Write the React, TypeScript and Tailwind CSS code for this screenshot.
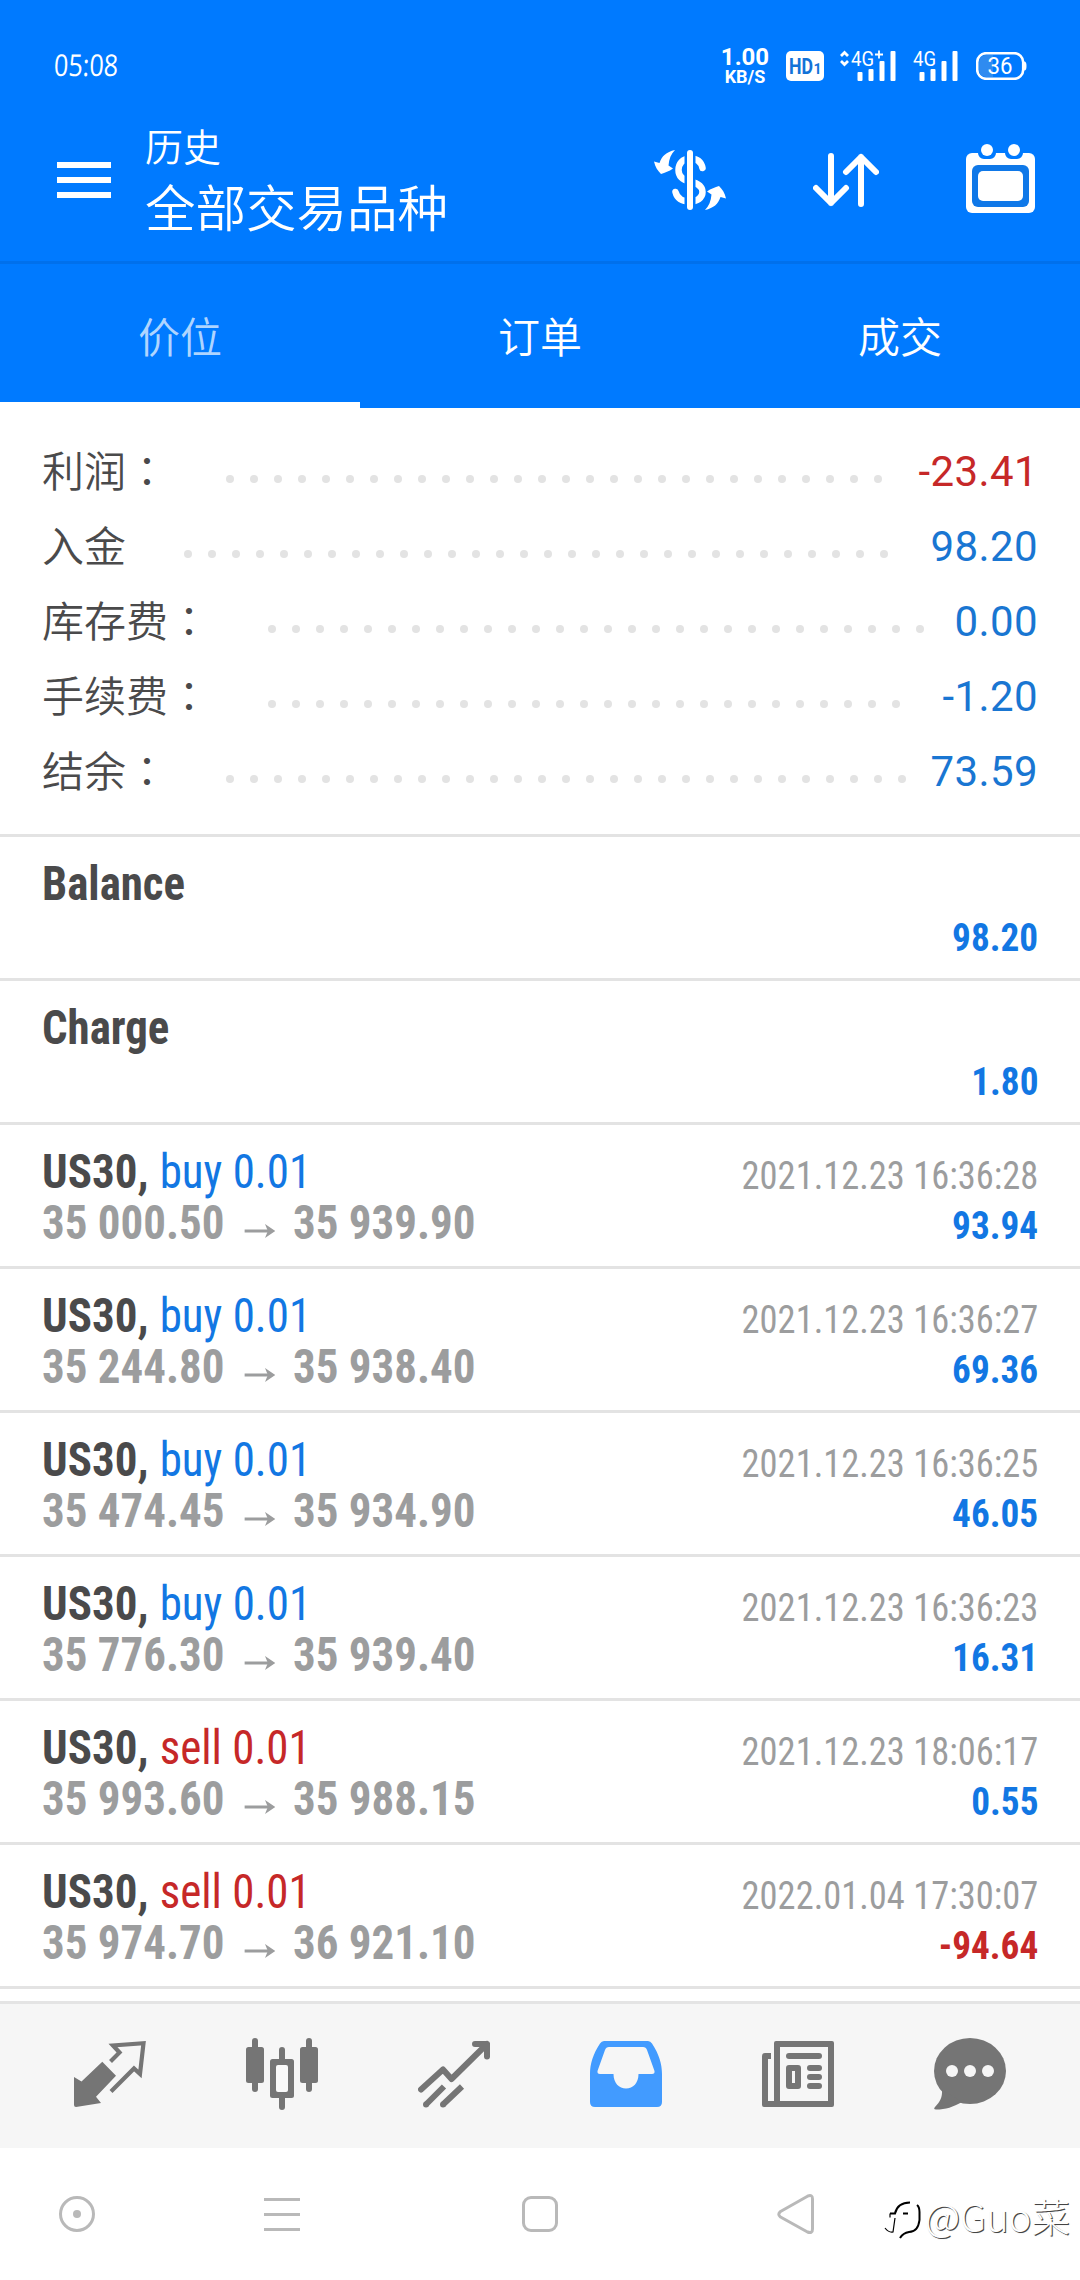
import type { ReactNode } from 'react'
import { clsx } from 'clsx'

type SummaryItem = { label: string; value: string; dots: number; negative?: boolean }
type Deal = { side: 'buy' | 'sell'; open: string; close: string; time: string; profit: string }

const summary: SummaryItem[] = [
  { label: '利润：', value: '-23.41', dots: 28, negative: true },
  { label: '入金', value: '98.20', dots: 30 },
  { label: '库存费：', value: '0.00', dots: 28 },
  { label: '手续费：', value: '-1.20', dots: 27 },
  { label: '结余：', value: '73.59', dots: 29 },
]

const operations = [
  { name: 'Balance', value: '98.20' },
  { name: 'Charge', value: '1.80' },
]

const deals: Deal[] = [
  { side: 'buy', open: '35 000.50', close: '35 939.90', time: '2021.12.23 16:36:28', profit: '93.94' },
  { side: 'buy', open: '35 244.80', close: '35 938.40', time: '2021.12.23 16:36:27', profit: '69.36' },
  { side: 'buy', open: '35 474.45', close: '35 934.90', time: '2021.12.23 16:36:25', profit: '46.05' },
  { side: 'buy', open: '35 776.30', close: '35 939.40', time: '2021.12.23 16:36:23', profit: '16.31' },
  { side: 'sell', open: '35 993.60', close: '35 988.15', time: '2021.12.23 18:06:17', profit: '0.55' },
  { side: 'sell', open: '35 974.70', close: '36 921.10', time: '2022.01.04 17:30:07', profit: '-94.64' },
]

function Signal({ plus }: { plus?: boolean }) {
  return (
    <svg width="58" height="32" viewBox="0 0 58 32" fill="white" className="shrink-0 overflow-visible">
      {plus && (
        <path d="M2 6 L5.5 2.5 L9 6 M2 11 L5.5 14.5 L9 11" fill="none" stroke="white" strokeWidth="2.8" />
      )}
      <text x="12" y="16" fontSize="21" textLength="23" lengthAdjust="spacingAndGlyphs" className="font-['Roboto',sans-serif]">4G</text>
      {plus && <path d="M36 4.5h8M40 0.5v8" stroke="white" strokeWidth="1.8" />}
      <rect x="18.5" y="22" width="5" height="9" rx="1" />
      <rect x="29.5" y="19" width="5" height="12" rx="1" />
      <rect x="40.5" y="11" width="5" height="20" rx="1" />
      <rect x="51.5" y="1" width="5" height="30" rx="1" />
    </svg>
  )
}

function StatusBar() {
  return (
    <div className="flex h-[99px] items-center pt-[33px] pl-[54px] pr-[53px] text-white">
      <span className="mb-[3px] inline-block origin-left -skew-x-3 scale-x-[0.84] font-['Open_Sans',sans-serif] text-[30px] leading-none">05:08</span>
      <div className="ml-auto flex items-center">
        <div className="mr-[17px] flex w-[48px] flex-col items-center font-['Roboto',sans-serif] font-bold">
          <span className="text-[24px] leading-[19px]">1.00</span>
          <span className="mt-[1px] text-[18px] leading-[17px]">KB/S</span>
        </div>
        <svg width="38" height="30" viewBox="0 0 38 30" className="font-['Roboto',sans-serif] font-bold" fill="#1272d8">
          <rect width="38" height="30" rx="5" fill="white" />
          <text x="3" y="23" fontSize="22.5" textLength="24" lengthAdjust="spacingAndGlyphs">HD</text>
          <text x="27.5" y="22.5" fontSize="14">1</text>
        </svg>
        <div className="ml-[15px]"><Signal plus /></div>
        <div className="ml-[4px]"><Signal /></div>
        <div className="ml-[17px]">
          <svg width="51" height="28" viewBox="0 0 51 28">
            <rect x="1.2" y="1.2" width="46" height="25.6" rx="9" fill="none" stroke="white" strokeWidth="2.6" />
            <path d="M10 3h7v22h-7a7 7 0 0 1-7-7v-8a7 7 0 0 1 7-7Z" fill="#2f8bf0" />
            <path d="M48 9.5c2 0 2.5 1.5 2.5 4.5s-.5 4.5-2.5 4.5Z" fill="white" />
            <text x="11.5" y="22" fontSize="23" textLength="25" lengthAdjust="spacingAndGlyphs" className="font-['Roboto',sans-serif] font-normal" fill="white">36</text>
          </svg>
        </div>
      </div>
    </div>
  )
}

function Header() {
  return (
    <div className="flex h-[162px] items-center pl-[57px] pr-[45px] text-white">
      <div className="flex w-[54px] flex-col gap-[9px]">
        <div className="h-[6px] bg-white" />
        <div className="h-[6px] bg-white" />
        <div className="h-[6px] bg-white" />
      </div>
      <div className="mb-[6px] ml-[34px] flex flex-col font-['Noto_Sans_CJK_SC',sans-serif] font-[350]">
        <span className="text-[38px] leading-[56px]">历史</span>
        <span className="text-[50.5px] leading-[64px]">全部交易品种</span>
      </div>
      <div className="ml-auto flex items-center gap-[87px]">
        <svg width="72" height="60" viewBox="0 0 72 60" fill="white">
          <path
            d="M48.5 18C47 10.5 42 8.5 36 8.5C28.5 8.5 24.5 14 24.5 20C24.5 27 29 30 36 31.5C45 33.5 48.5 37 48.5 42C48.5 48 43 51.5 36 51.5C28 51.5 23 48 21.5 42"
            fill="none"
            stroke="white"
            strokeWidth="6.5"
            strokeLinecap="round"
          />
          <path d="M36 0v60" stroke="#007aff" strokeWidth="11" />
          <path d="M36 3v54" stroke="white" strokeWidth="6" strokeLinecap="round" />
          <path d="M21 0C12 2 8 6 5.5 13L0 11.5C1 17 4 21 7 24C11 22.5 15 21.5 19 18.5L14.5 15.5C15 9 17 4 21 0Z" />
          <path d="M51 60C60 58 64 54 66.5 47L72 48.5C71 43 68 39 65 36C61 37.5 57 38.5 53 41.5L57.5 44.5C57 51 55 56 51 60Z" />
        </svg>
        <svg width="66" height="54" viewBox="0 0 66 54" fill="none" stroke="white" strokeWidth="6" strokeLinecap="round" strokeLinejoin="round">
          <path d="M18 3v47M3 35l15 15 15-15" />
          <path d="M48 51V4M33 19L48 4l15 15" />
        </svg>
        <svg width="69" height="69" viewBox="0 0 69 69" fill="white" className="-mt-[3px]">
          <rect y="9" width="69" height="60" rx="6" />
          <path d="M12 8v1a6 6 0 0 0 6 6h6a6 6 0 0 0 6-6V8ZM39 8v1a6 6 0 0 0 6 6h6a6 6 0 0 0 6-6V8Z" fill="#007aff" />
          <circle cx="21" cy="6" r="6" />
          <circle cx="48" cy="6" r="6" />
          <rect x="6" y="21" width="57" height="42" rx="6" fill="#0f78e8" />
          <rect x="12" y="27" width="45" height="30" rx="5" />
        </svg>
      </div>
    </div>
  )
}

function Tabs() {
  return (
    <div className="grid h-[147px] grid-cols-3 border-t-[3px] border-[#0070ec] font-['Noto_Sans_CJK_SC',sans-serif] text-[42px] font-[350] text-white">
      <div className="flex items-center justify-center border-b-[6px] border-white pt-[3px] text-white/70">价位</div>
      <div className="flex items-center justify-center pb-[3px]">订单</div>
      <div className="flex items-center justify-center pb-[3px]">成交</div>
    </div>
  )
}

function SummaryRow({ item }: { item: SummaryItem }) {
  return (
    <div className="flex h-[75px] items-center">
      <span className="mb-[3px] text-[42px] leading-[72px] font-[350] text-[#4a4a4b]">
        {item.label.split('').map((char, i) => (
          <span key={i} className={char === '：' ? "font-['Noto_Sans_CJK_TC']" : "font-['Noto_Sans_CJK_SC']"}>{char}</span>
        ))}
      </span>
      <div className="ml-[58px] flex gap-[16px] pt-[15px]">
        {Array.from({ length: item.dots }, (_, i) => (
          <span key={i} className="size-[8px] rounded-full bg-[#e3e3e3]" />
        ))}
      </div>
      <span className={clsx("ml-auto font-['Roboto',sans-serif] text-[42px] tracking-[0.4px]", item.negative ? 'text-[#c62828]' : 'text-[#1976d2]')}>
        {item.value}
      </span>
    </div>
  )
}

function Row({ children }: { children: ReactNode }) {
  return (
    <div className="flex h-[144px] justify-between border-t-[3px] border-[#e3e3e3] px-[42px] font-['Roboto',sans-serif] whitespace-nowrap [font-stretch:75%]">
      {children}
    </div>
  )
}

function Profit({ value }: { value: string }) {
  return (
    <span className={clsx('origin-right scale-x-[0.955] text-[39px] leading-[48px] font-bold', value.startsWith('-') ? 'text-[#c62828]' : 'text-[#1277e3]')}>
      {value}
    </span>
  )
}

function DealRow({ deal }: { deal: Deal }) {
  return (
    <Row>
      <div className="flex origin-left scale-x-[0.937] flex-col pt-[21px] text-[48px] leading-[51px]">
        <span>
          <b className="text-[#4a4a4b]">US30,</b>{' '}
          <span className={clsx('ml-[1px]', deal.side === 'buy' ? 'text-[#1277e3]' : 'text-[#c62828]')}>{deal.side} 0.01</span>
        </span>
        <span className="flex items-center font-bold text-[#9c9d9e]">
          {deal.open}
          <svg width="33" height="14" viewBox="0 0 33 14" className="mr-[19px] ml-[21px] mt-[16px]">
            <path d="M0 7h27" stroke="#9c9d9e" strokeWidth="3" />
            <path d="M22 0l11 7-11 7 3-7Z" fill="#9c9d9e" />
          </svg>
          {deal.close}
        </span>
      </div>
      <div className="flex flex-col items-end pt-[25px]">
        <span className="origin-right scale-x-[0.935] text-[39px] leading-[52px] text-[#9c9d9e]">{deal.time}</span>
        <Profit value={deal.profit} />
      </div>
    </Row>
  )
}

function BottomBar() {
  const gray = '#757575'
  return (
    <div className="flex h-[147px] items-center justify-between border-t-[3px] border-[#e4e4e4] bg-[#f6f6f6] px-[74px]">
      <svg width="72" height="72" viewBox="0 0 72 72" fill={gray}>
        <path d="M0 37l7.5 4.5L28.3 21.7 42 35.7 22 56.7l5 6.3L2 67q-2 0-2-2Z" />
        <path d="M36.5 21.5l9-9-6.5-7L69.5 3.2 66 34l-6-5.5-23 23" fill="none" stroke={gray} strokeWidth="4.2" />
      </svg>
      <svg width="72" height="72" viewBox="0 0 72 72" className="overflow-visible" fill={gray}>
        <rect x="6" y="-2" width="6" height="54" rx="3" />
        <rect y="7" width="18" height="36" rx="2.5" />
        <rect x="33" y="7" width="6" height="63" rx="3" />
        <rect x="24" y="19" width="24" height="39" rx="2.5" />
        <rect x="30" y="25" width="12" height="27" rx="2" fill="#fafafa" />
        <rect x="60" y="-2" width="6" height="54" rx="3" />
        <rect x="54" y="7" width="18" height="36" rx="2.5" />
      </svg>
      <svg width="72" height="72" viewBox="0 0 72 72" fill="none" stroke={gray} strokeWidth="6">
        <path d="M3 49.5L25 29.5l8.5 9.5L69 4M57 4h12v12.5" strokeLinecap="round" strokeLinejoin="round" />
        <path d="M8 64.5L26 46.5M25 64.5L44 46.5" />
        <path d="M8 64.5h.01M25 64.5h.01" strokeLinecap="round" />
      </svg>
      <svg width="72" height="72" viewBox="0 0 72 72">
        <path d="M14 1h44q2.5 0 4 2.5C69 14 72 24 72 34v28q0 5-5 5H5q-5 0-5-5V34C0 24 3 14 10 3.5Q11.5 1 14 1Z" fill="#429bff" />
        <path d="M19 7h34q3 0 4 3l7.5 21q.5 3-2.5 3H48.5C48.5 43 43 48.5 36 48.5S23.5 43 23.5 34H10q-3 0-2.5-3L15 10q1-3 4-3Z" fill="#f6f6f6" />
      </svg>
      <svg width="72" height="72" viewBox="0 0 72 72" fill={gray}>
        <path fillRule="evenodd" d="M14 1h56q2 0 2 2v62q0 2-2 2H2q-2 0-2-2V16q0-3 3-3h6v6H6v42h6V3q0-2 2-2Zm4 6v54h48V7Z" />
        <rect x="24" y="13" width="36" height="6" rx="3" />
        <path fillRule="evenodd" d="M27 25h9q3 0 3 3v18q0 3-3 3h-9q-3 0-3-3V28q0-3 3-3Zm3 6v12h3V31Z" />
        <rect x="45" y="25" width="15" height="6" rx="3" />
        <rect x="45" y="34" width="15" height="6" rx="3" />
        <rect x="45" y="43" width="15" height="6" rx="3" />
      </svg>
      <svg width="72" height="72" viewBox="0 0 72 72" className="overflow-visible" fill={gray}>
        <ellipse cx="36" cy="31" rx="36" ry="33" />
        <path d="M8 50C8.5 57 6 62 1 67q-2 2.5 1 2.5C12 69.5 19 67 28 62Z" />
        <circle cx="18" cy="31" r="6" fill="#f6f6f6" />
        <circle cx="36" cy="31" r="6" fill="#f6f6f6" />
        <circle cx="54" cy="31" r="6" fill="#f6f6f6" />
      </svg>
    </div>
  )
}

function SystemNav() {
  return (
    <div className="relative flex h-[132px] items-center bg-white pl-[57px]">
      <svg width="40" height="42" viewBox="0 0 40 42" fill="none" stroke="#b9b9b9" strokeWidth="3">
        <circle cx="20" cy="21" r="16.5" />
        <circle cx="20" cy="21" r="4" fill="#b9b9b9" stroke="none" />
      </svg>
      <svg width="40" height="42" viewBox="0 0 40 42" stroke="#b9b9b9" strokeWidth="3" className="ml-[167px]">
        <path d="M0 6.5h36M0 21.5h36M0 36.5h36" />
      </svg>
      <svg width="40" height="42" viewBox="0 0 40 42" fill="none" stroke="#b9b9b9" strokeWidth="3" className="ml-[216px]">
        <rect x="3.5" y="4.5" width="33" height="33" rx="7.5" />
      </svg>
      <svg width="40" height="42" viewBox="0 0 40 42" fill="none" stroke="#b9b9b9" strokeWidth="3" strokeLinejoin="round" className="ml-[216px]">
        <path d="M4.5 18.5L31.5 3.2Q36.5 1 36.5 6V36q0 5-5 3L4.5 24Q1 21.3 4.5 18.5Z" />
      </svg>
      {/* Author mark over the right edge */}
      <div className="absolute top-[41px] right-[10px] flex items-center">
        <svg width="38" height="42" viewBox="0 0 38 42" fill="none" stroke="black" className="mt-[10px] mr-[3px]">
          <path d="M6 14.500h5C12.500 8 16 3.500 26 3.500M19 14.500h5" strokeWidth="2" />
          <path d="M33 6Q35.500 8 35.500 13v8Q34 33 25 33q-6 1-9 6" strokeWidth="2" />
          <path d="M6 14.500v4M1 29q4 5 8 4l2-14" strokeWidth="1.200" />
        </svg>
        <span className="font-['Noto_Sans_CJK_SC',sans-serif] text-[38.5px] leading-[50px] font-light text-white [text-shadow:1px_1px_0px_#444,1px_1px_1px_#aaa]">@Guo菜</span>
      </div>
    </div>
  )
}

export default function App() {
  return (
    <main className="flex h-[2280px] w-[1080px] flex-col overflow-hidden bg-white">
      <header className="bg-[#007aff]">
        <StatusBar />
        <Header />
        <Tabs />
      </header>
      {/* Totals */}
      <section className="h-[426px] shrink-0 px-[42px] pt-[26px]">
        {summary.map((item) => (
          <SummaryRow key={item.label} item={item} />
        ))}
      </section>
      {/* History list */}
      <section className="h-[1167px] shrink-0 overflow-hidden">
        {operations.map((op) => (
          <Row key={op.name}>
            <span className="origin-left scale-x-[0.935] pt-[21px] text-[48px] leading-[51px] font-bold text-[#4a4a4b]">{op.name}</span>
            <div className="flex items-end pb-[16px]">
              <Profit value={op.value} />
            </div>
          </Row>
        ))}
        {deals.map((deal) => (
          <DealRow key={deal.time} deal={deal} />
        ))}
        <div className="h-[3px] bg-[#e3e3e3]" />
      </section>
      <BottomBar />
      <SystemNav />
    </main>
  )
}
